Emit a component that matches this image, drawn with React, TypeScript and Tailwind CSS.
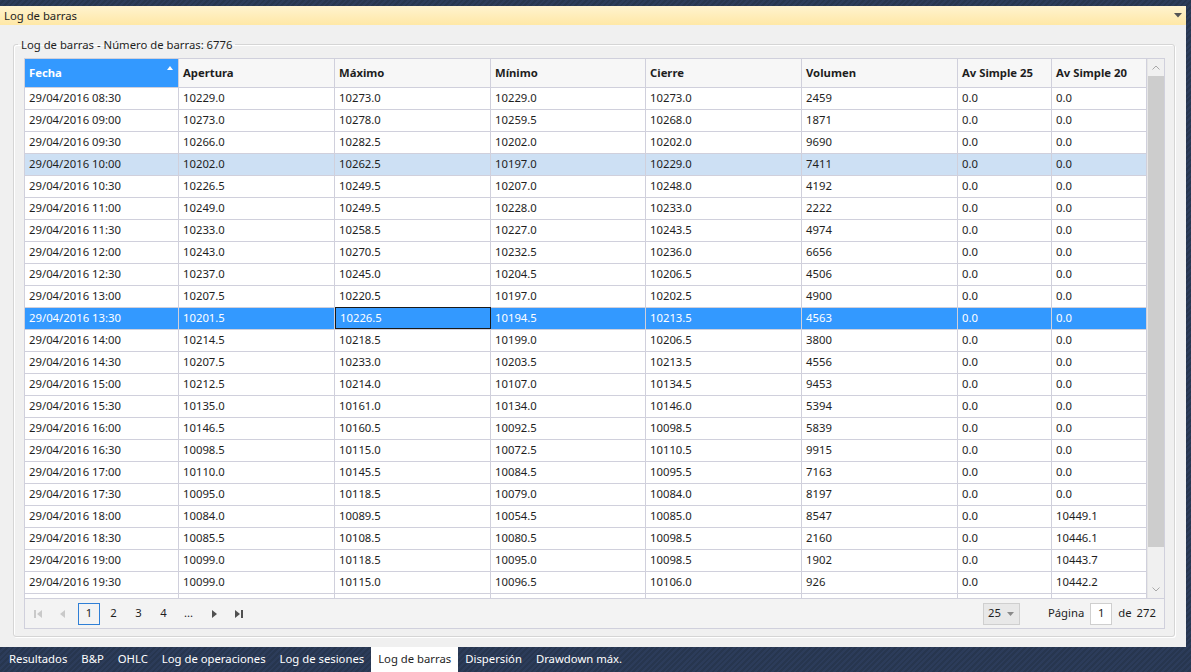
import React from "react";

type Row = [string, string, string, string, string, string, string, string];

const rows: Row[] = [
  ["29/04/2016 08:30", "10229.0", "10273.0", "10229.0", "10273.0", "2459", "0.0", "0.0"],
  ["29/04/2016 09:00", "10273.0", "10278.0", "10259.5", "10268.0", "1871", "0.0", "0.0"],
  ["29/04/2016 09:30", "10266.0", "10282.5", "10202.0", "10202.0", "9690", "0.0", "0.0"],
  ["29/04/2016 10:00", "10202.0", "10262.5", "10197.0", "10229.0", "7411", "0.0", "0.0"],
  ["29/04/2016 10:30", "10226.5", "10249.5", "10207.0", "10248.0", "4192", "0.0", "0.0"],
  ["29/04/2016 11:00", "10249.0", "10249.5", "10228.0", "10233.0", "2222", "0.0", "0.0"],
  ["29/04/2016 11:30", "10233.0", "10258.5", "10227.0", "10243.5", "4974", "0.0", "0.0"],
  ["29/04/2016 12:00", "10243.0", "10270.5", "10232.5", "10236.0", "6656", "0.0", "0.0"],
  ["29/04/2016 12:30", "10237.0", "10245.0", "10204.5", "10206.5", "4506", "0.0", "0.0"],
  ["29/04/2016 13:00", "10207.5", "10220.5", "10197.0", "10202.5", "4900", "0.0", "0.0"],
  ["29/04/2016 13:30", "10201.5", "10226.5", "10194.5", "10213.5", "4563", "0.0", "0.0"],
  ["29/04/2016 14:00", "10214.5", "10218.5", "10199.0", "10206.5", "3800", "0.0", "0.0"],
  ["29/04/2016 14:30", "10207.5", "10233.0", "10203.5", "10213.5", "4556", "0.0", "0.0"],
  ["29/04/2016 15:00", "10212.5", "10214.0", "10107.0", "10134.5", "9453", "0.0", "0.0"],
  ["29/04/2016 15:30", "10135.0", "10161.0", "10134.0", "10146.0", "5394", "0.0", "0.0"],
  ["29/04/2016 16:00", "10146.5", "10160.5", "10092.5", "10098.5", "5839", "0.0", "0.0"],
  ["29/04/2016 16:30", "10098.5", "10115.0", "10072.5", "10110.5", "9915", "0.0", "0.0"],
  ["29/04/2016 17:00", "10110.0", "10145.5", "10084.5", "10095.5", "7163", "0.0", "0.0"],
  ["29/04/2016 17:30", "10095.0", "10118.5", "10079.0", "10084.0", "8197", "0.0", "0.0"],
  ["29/04/2016 18:00", "10084.0", "10089.5", "10054.5", "10085.0", "8547", "0.0", "10449.1"],
  ["29/04/2016 18:30", "10085.5", "10108.5", "10080.5", "10098.5", "2160", "0.0", "10446.1"],
  ["29/04/2016 19:00", "10099.0", "10118.5", "10095.0", "10098.5", "1902", "0.0", "10443.7"],
  ["29/04/2016 19:30", "10099.0", "10115.0", "10096.5", "10106.0", "926", "0.0", "10442.2"],
  // only the top few pixels of the next row are visible
  ["", "", "", "", "", "", "", ""],
];

const columns = [
  { title: "Fecha", w: "w-[154px]" },
  { title: "Apertura", w: "w-[156px]" },
  { title: "Máximo", w: "w-[156px]" },
  { title: "Mínimo", w: "w-[155px]" },
  { title: "Cierre", w: "w-[156px]" },
  { title: "Volumen", w: "w-[156px]" },
  { title: "Av Simple 25", w: "w-[94px]" },
  { title: "Av Simple 20", w: "w-[95px]" },
];

const tabs = [
  "Resultados",
  "B&P",
  "OHLC",
  "Log de operaciones",
  "Log de sesiones",
  "Log de barras",
  "Dispersión",
  "Drawdown máx.",
];

function PagerIcon({ kind, disabled }: { kind: "first" | "prev" | "next" | "last"; disabled?: boolean }) {
  const c = disabled ? "#c9c9c9" : "#505050";
  return (
    <svg width="10" height="10" viewBox="0 0 10 10">
      {kind === "first" && (
        <>
          <rect x="1" y="1" width="2" height="8" fill={c} />
          <path d="M9 1 L4 5 L9 9 Z" fill={c} />
        </>
      )}
      {kind === "prev" && <path d="M7 1 L2 5 L7 9 Z" fill={c} />}
      {kind === "next" && <path d="M3 1 L8 5 L3 9 Z" fill={c} />}
      {kind === "last" && (
        <>
          <path d="M1 1 L6 5 L1 9 Z" fill={c} />
          <rect x="7" y="1" width="2" height="8" fill={c} />
        </>
      )}
    </svg>
  );
}

export default function App() {
  return (
    <div className="w-[1191px] h-[672px] overflow-hidden flex flex-col bg-[repeating-linear-gradient(135deg,#2c3c5a_0px,#2c3c5a_2px,#27364f_2px,#27364f_4px)] font-['Segoe_UI','Noto_Sans',sans-serif] text-[11.3px] text-[#1e1e1e]">
      <div className="h-[6px] shrink-0" />
      <div className="w-[1186px] h-[641px] shrink-0 flex flex-col bg-[#f0f0f0]">
        {/* title bar */}
        <div className="h-[19px] shrink-0 flex items-center justify-between pl-[4px] pr-[4px] bg-[linear-gradient(#fff3cf,#ffe8a6)] leading-none">
          <span>Log de barras</span>
          <svg width="8" height="5" viewBox="0 0 8 5">
            <path d="M0 0 L8 0 L4 4.5 Z" fill="#555" />
          </svg>
        </div>

        <fieldset className="mt-[11px] ml-[13px] w-[1162px] h-[601px] border border-[#d5d5d5] rounded-[3px] shadow-[inset_1px_1px_0_#fff,1px_1px_0_#fff] pt-[5px] pl-[10px] min-w-0">
          <legend className="-ml-[6px] px-[3px] leading-[17px]">Log de barras - Número de barras: 6776</legend>

          <div className="w-[1141px] border border-[#d0d0dc] flex flex-col bg-white">
            <div className="flex">
              <div className="flex flex-col">
                {/* header */}
                <div className="flex h-[29px] bg-[#f7f7f7] border-b border-[#d0d0dc]">
                  {columns.map((col, i) => (
                    <div
                      key={col.title}
                      className={`${col.w} shrink-0 flex items-center justify-between px-[4px] font-bold border-r border-[#d0d0dc] ${
                        i === 0 ? "bg-[#3399ff] text-white" : ""
                      }`}
                    >
                      <span>{col.title}</span>
                      {i === 0 && (
                        <svg width="6" height="4" viewBox="0 0 6 4" className="-mt-[10px] mr-[1px]">
                          <path d="M0 4 L3 0 L6 4 Z" fill="#fff" />
                        </svg>
                      )}
                    </div>
                  ))}
                </div>
                {/* rows */}
                <div className="h-[510px] overflow-hidden">
                  {rows.map((r, ri) => {
                    const selected = ri === 10;
                    const hover = ri === 3;
                    return (
                      <div
                        key={ri}
                        className={`flex h-[22px] border-b border-[#d0d0dc] ${
                          selected ? "bg-[#3399ff] text-white" : hover ? "bg-[#cde0f4]" : "bg-white"
                        }`}
                      >
                        {r.map((v, ci) => (
                          <div
                            key={ci}
                            className={`${columns[ci].w} shrink-0 flex items-center px-[4px] border-r ${
                              selected && ci === 2
                                ? "border border-[#1a1a1a] -mt-px h-[22px]"
                                : "border-[#d0d0dc]"
                            }`}
                          >
                            {v}
                          </div>
                        ))}
                      </div>
                    );
                  })}
                </div>
              </div>
              {/* scrollbar */}
              <div className="w-[17px] shrink-0 flex flex-col bg-[#f0f0f0] border-l border-[#e6e6e6]">
                <div className="h-[17px] flex items-center justify-center">
                  <svg width="8" height="5" viewBox="0 0 8 5">
                    <path d="M0.5 4.5 L4 1 L7.5 4.5" stroke="#a8a8a8" fill="none" />
                  </svg>
                </div>
                <div className="h-[471px] bg-[#cdcdcd]" />
                <div className="flex-1" />
                <div className="h-[17px] flex items-center justify-center">
                  <svg width="8" height="5" viewBox="0 0 8 5">
                    <path d="M0.5 0.5 L4 4 L7.5 0.5" stroke="#a8a8a8" fill="none" />
                  </svg>
                </div>
              </div>
            </div>

            {/* pager */}
            <div className="h-[30px] flex items-center justify-between bg-[#f3f3f3] border-t border-[#d0d0dc]">
              <div className="flex items-center">
                <div className="w-[25px] h-[22px] flex items-center justify-center">
                  <PagerIcon kind="first" disabled />
                </div>
                <div className="w-[25px] h-[22px] flex items-center justify-center">
                  <PagerIcon kind="prev" disabled />
                </div>
                <div className="w-[22px] h-[22px] ml-[3px] mr-[1px] flex items-center justify-center border border-[#2f7fd6]">1</div>
                <div className="w-[25px] h-[22px] flex items-center justify-center">2</div>
                <div className="w-[25px] h-[22px] flex items-center justify-center">3</div>
                <div className="w-[25px] h-[22px] flex items-center justify-center">4</div>
                <div className="w-[25px] h-[22px] flex items-center justify-center">...</div>
                <div className="w-[25px] h-[22px] flex items-center justify-center">
                  <PagerIcon kind="next" />
                </div>
                <div className="w-[25px] h-[22px] flex items-center justify-center">
                  <PagerIcon kind="last" />
                </div>
              </div>
              <div className="flex items-center pr-[8px]">
                <div className="w-[37px] h-[22px] flex items-center justify-between pl-[4px] pr-[5px] bg-[#e8e8e8] border border-[#cfcfcf]">
                  <span>25</span>
                  <svg width="7" height="4" viewBox="0 0 7 4">
                    <path d="M0 0 L7 0 L3.5 4 Z" fill="#8a8a8a" />
                  </svg>
                </div>
                <span className="ml-[28px]">Página</span>
                <div className="ml-[6px] w-[22px] h-[22px] flex items-center justify-center bg-white border border-[#cfcfcf]">1</div>
                <span className="ml-[6px]">de</span>
                <span className="ml-[5px]">272</span>
              </div>
            </div>
          </div>
        </fieldset>
      </div>

      {/* bottom tabs */}
      <div className="h-[25px] shrink-0 flex items-stretch pl-[2px] mt-auto">
        {tabs.map((t) => (
          <div
            key={t}
            className={`px-[7px] flex items-center ${t === "Log de barras" ? "bg-white text-[#1e1e1e]" : "text-white"}`}
          >
            {t}
          </div>
        ))}
      </div>
    </div>
  );
}
